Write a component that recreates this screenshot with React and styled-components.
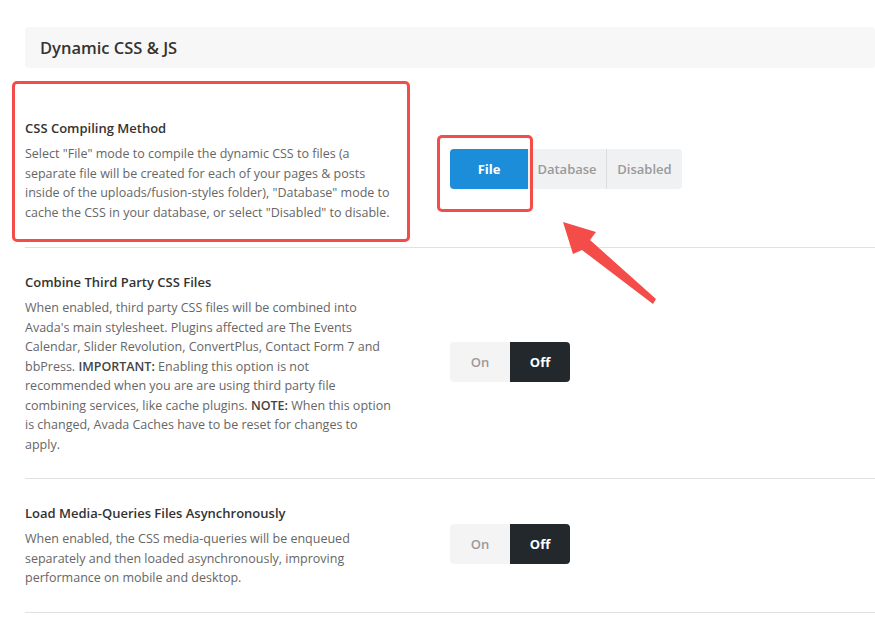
import React from "react"
import styled, { createGlobalStyle } from "styled-components"

const GlobalStyle = createGlobalStyle`
  html, body {
    margin: 0;
    padding: 0;
    background: #ffffff;
    overflow: hidden;
  }
  body {
    font-family: "Open Sans", "Noto Sans", Arial, sans-serif;
    -webkit-font-smoothing: antialiased;
  }
`

const Page = styled.div`
  width: 875px;
  padding: 27px 0 0 25px;
  box-sizing: border-box;
`

const Header = styled.div`
  height: 41px;
  background: #f7f7f7;
  border-radius: 4px;
  margin-bottom: 26px;
  padding-left: 15px;
  display: flex;
  align-items: center;
  font-size: 16.5px;
  font-weight: 600;
  color: #333;
`

const Section = styled.section`
  position: relative;
  display: grid;
  grid-template-columns: 425px 1fr;
  align-items: center;
  padding: 24px 0;
  border-bottom: 1px solid #e1e1e1;

  &:first-of-type {
    padding-bottom: 25px;
  }
`

const TextCol = styled.div`
  position: relative;
  max-width: 370px;
`

const Title = styled.h3`
  margin: 0 0 6px;
  font-size: 13px;
  line-height: 20px;
  font-weight: 600;
  color: #333;
`

const Desc = styled.p`
  margin: 0;
  font-size: 12.5px;
  line-height: 19.5px;
  color: #666;

  strong {
    font-weight: 600;
    color: #444;
  }
`

const Control = styled.div`
  position: relative;
  display: flex;
  margin-top: -2px;
`

const Group = styled.div`
  display: flex;
  height: 40px;
  border-radius: 4px;
  overflow: hidden;
  background: ${p => p.$bg || "#f0f1f3"};
`

const Option = styled.div`
  width: ${p => p.$w}px;
  display: flex;
  align-items: center;
  justify-content: center;
  font-size: 13px;
  font-weight: ${p => (p.$active ? 700 : 600)};
  color: ${p => (p.$active ? "#fff" : "#9a9a9a")};
  background: ${p => (p.$active ? p.$activeBg : "transparent")};
  border-left: ${p => (p.$sep ? "1px solid #dcdcdc" : "none")};
  box-sizing: border-box;
`

const Mark = styled.div`
  position: absolute;
  border: 3px solid #f44c49;
  border-radius: 5px;
  box-sizing: border-box;
  pointer-events: none;
  top: ${p => p.$top}px;
  left: ${p => p.$left}px;
  width: ${p => p.$w}px;
  height: ${p => p.$h}px;
`

const Arrow = styled.svg`
  position: absolute;
  left: 535px;
  top: 125px;
  z-index: 2;
`

const Toggle = ({ on }) => (
  <Group $bg="#f4f4f4">
    <Option $w={60} $active={on} $activeBg="#23282d">On</Option>
    <Option $w={60} $active={!on} $activeBg="#23282d">Off</Option>
  </Group>
)

export default function App() {
  return (
    <Page>
      <GlobalStyle />
      <Header>Dynamic CSS &amp; JS</Header>

      <Section>
        <TextCol>
          <Mark $top={-37} $left={-13} $w={398} $h={161} />
          <Title>CSS Compiling Method</Title>
          <Desc>
            Select "File" mode to compile the dynamic CSS to files (a separate
            file will be created for each of your pages &amp; posts inside of
            the uploads/fusion-styles folder), "Database" mode to cache the CSS
            in your database, or select "Disabled" to disable.
          </Desc>
        </TextCol>
        <Control>
          <Group>
            <Option $w={78} $active $activeBg="#1b8dd9">File</Option>
            <Option $w={78}>Database</Option>
            <Option $w={76} $sep>Disabled</Option>
          </Group>
          <Mark $top={-14} $left={-13} $w={96} $h={77} />
        </Control>
        <Arrow width="100" height="90" viewBox="0 0 100 90">
          <polygon
            fill="#f44c49"
            points="3,3 36,13 30,21 96,80 93,85 22,31 13,35"
          />
        </Arrow>
      </Section>

      <Section>
        <TextCol>
          <Title>Combine Third Party CSS Files</Title>
          <Desc>
            When enabled, third party CSS files will be combined into Avada's
            main stylesheet. Plugins affected are The Events Calendar, Slider
            Revolution, ConvertPlus, Contact Form 7 and bbPress.{" "}
            <strong>IMPORTANT:</strong> Enabling this option is not recommended
            when you are are using third party file combining services, like
            cache plugins. <strong>NOTE:</strong> When this option is changed,
            Avada Caches have to be reset for changes to apply.
          </Desc>
        </TextCol>
        <Control>
          <Toggle on={false} />
        </Control>
      </Section>

      <Section>
        <TextCol>
          <Title>Load Media-Queries Files Asynchronously</Title>
          <Desc>
            When enabled, the CSS media-queries will be enqueued separately and
            then loaded asynchronously, improving performance on mobile and
            desktop.
          </Desc>
        </TextCol>
        <Control>
          <Toggle on={false} />
        </Control>
      </Section>
    </Page>
  )
}
